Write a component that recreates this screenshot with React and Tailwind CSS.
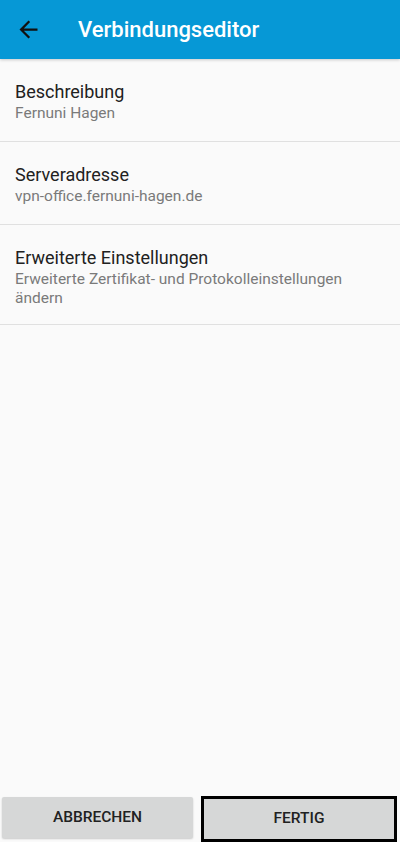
import React from "react";

const rows = [
  { title: "Beschreibung", sub: "Fernuni Hagen" },
  { title: "Serveradresse", sub: "vpn-office.fernuni-hagen.de" },
  {
    title: "Erweiterte Einstellungen",
    sub: "Erweiterte Zertifikat- und Protokolleinstellungen ändern",
  },
];

const App = () => {
  return (
    <div className="flex h-[842px] w-[400px] flex-col bg-[#fafafa] font-['Roboto',sans-serif]">
      <header className="flex h-[59px] shrink-0 items-center bg-[#0698d6] shadow-[0_1px_3px_rgba(0,0,0,0.2)]">
        <div className="ml-[15px] flex h-[27px] w-[27px] items-center justify-center">
          <svg viewBox="0 0 24 24" className="h-[27px] w-[27px]" fill="#111">
            <path d="M20 11H7.83l5.59-5.59L12 4l-8 8 8 8 1.41-1.41L7.83 13H20v-2z" />
          </svg>
        </div>
        <h1 className="ml-[36px] text-[22px] font-medium leading-none text-white">
          Verbindungseditor
        </h1>
      </header>

      <ul>
        {rows.map((row) => (
          <li
            key={row.title}
            className="border-b border-[#e0e0e0] px-[15px] pt-[20px] pb-[18px] last:pb-[16px]"
          >
            <p className="text-[18px] leading-[25px] text-[#212121]">{row.title}</p>
            <p className="pr-[40px] text-[15.5px] leading-[19px] text-[#7a7a7a]">
              {row.sub}
            </p>
          </li>
        ))}
      </ul>

      <div className="flex-1" />

      <div className="flex h-[48px] shrink-0 items-start gap-[8px] px-[2px] pt-[2px]">
        <button className="mt-[1px] flex h-[41px] w-[191px] items-center justify-center rounded-[2px] bg-[#d6d7d7] text-[15.5px] font-medium text-[#212121] shadow-[0_1px_2px_rgba(0,0,0,0.2)]">
          ABBRECHEN
        </button>
        <button className="flex h-[46px] w-[196px] items-center justify-center border-[3px] border-black bg-[#d6d7d7] text-[15.5px] font-medium text-[#212121]">
          FERTIG
        </button>
      </div>
    </div>
  );
};

export default App;
